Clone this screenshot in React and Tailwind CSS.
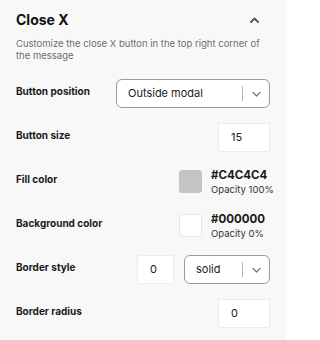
import React from "react";

const font = { fontFamily: "Inter, 'Noto Sans', sans-serif" };

function Chevron({ up }) {
  return (
    <svg width="9" height="6" viewBox="0 0 9 6" fill="none">
      <path
        d={up ? "M1 5L4.5 1.5L8 5" : "M1 1.5L4.5 5L8 1.5"}
        stroke={up ? "#555" : "#777"}
        strokeWidth={up ? 1.8 : 1.2}
        strokeLinecap="round"
        strokeLinejoin="round"
      />
    </svg>
  );
}

function Select({ value, className }) {
  return (
    <div className={`flex h-[29px] items-center rounded-[6px] border border-[#9a9a9a] bg-white ${className}`}>
      <span className="flex-1 pl-[11px] text-[11px] text-[#1a1a1a]">{value}</span>
      <span className="h-[15px] w-px bg-[#b5b5b5]" />
      <span className="flex w-[26px] justify-center">
        <Chevron />
      </span>
    </div>
  );
}

function NumInput({ value, className }) {
  return (
    <div className={`flex h-[29px] items-center rounded-[2px] border border-[#ececec] bg-white pl-[12px] text-[11px] text-[#1a1a1a] ${className}`}>
      {value}
    </div>
  );
}

function Label({ children }) {
  return <span className="mb-[5px] flex-1 text-[10px] font-bold text-[#1a1a1a]">{children}</span>;
}

function ColorRow({ label, swatch, hex, opacity }) {
  return (
    <div className="flex h-[29px] items-center">
      <Label>{label}</Label>
      <div className={`h-[23px] w-[23px] rounded-[3px] border ${swatch}`} />
      <div className="ml-[9px] flex w-[59px] flex-col whitespace-nowrap">
        <span className="text-[11.5px] font-bold leading-[15px] text-[#1a1a1a]">{hex}</span>
        <span className="text-[9.5px] leading-[13px] text-[#333]">{opacity}</span>
      </div>
    </div>
  );
}

export default function App() {
  return (
    <div className="h-[340px] w-[286px] bg-[#f8f8f8] px-[16px] pt-[12px]" style={font}>
      <div className="flex items-center justify-between pr-[11px]">
        <h2 className="text-[14px] font-bold leading-[16px] text-[#111]">Close X</h2>
        <Chevron up />
      </div>
      <p className="mt-[10px] text-[9.5px] leading-[12px] text-[#6e6e6e]">
        Customize the close X button in the top right corner of the message
      </p>
      <div className="mt-[17px] flex flex-col gap-[15px]">
        <div className="flex h-[29px] items-center">
          <Label>Button position</Label>
          <Select value="Outside modal" className="w-[154px]" />
        </div>
        <div className="flex h-[29px] items-center">
          <Label>Button size</Label>
          <NumInput value="15" className="w-[52px]" />
        </div>
        <ColorRow label="Fill color" swatch="bg-[#c4c4c4] border-[#c4c4c4]" hex="#C4C4C4" opacity="Opacity 100%" />
        <ColorRow label="Background color" swatch="bg-white border-[#e6e6e6]" hex="#000000" opacity="Opacity 0%" />
        <div className="flex h-[29px] items-center">
          <Label>Border style</Label>
          <NumInput value="0" className="w-[37px]" />
          <Select value="solid" className="ml-[10px] w-[86px]" />
        </div>
        <div className="flex h-[29px] items-center">
          <Label>Border radius</Label>
          <NumInput value="0" className="w-[52px]" />
        </div>
      </div>
    </div>
  );
}
